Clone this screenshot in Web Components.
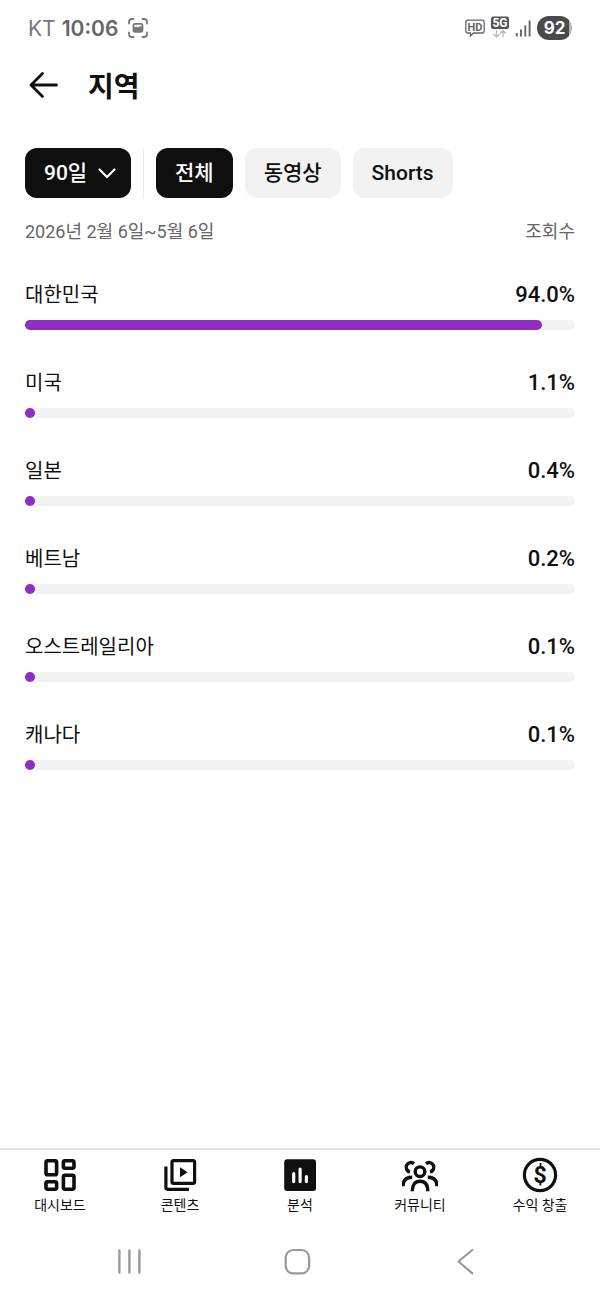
<!DOCTYPE html>
<html lang="ko">
<head>
<meta charset="utf-8">
<meta name="viewport" content="width=device-width, initial-scale=1">
<title>지역</title>
<style>
    body {
        margin: 0;
        background-color: #fff;
        color: #0f0f0f;
        font-family: Roboto, "Noto Sans CJK KR", sans-serif;
    }
</style>
</head>
<body>
<studio-app>
    <status-bar slot="top" carrier="KT" time="10:06" battery="92"></status-bar>
    <page-header slot="top">지역</page-header>

    <filter-bar>
        <period-select slot="period">90일</period-select>
        <filter-chip selected>전체</filter-chip>
        <filter-chip>동영상</filter-chip>
        <filter-chip>Shorts</filter-chip>
    </filter-bar>
    <range-caption>
        2026년 2월 6일~5월 6일
        <span slot="metric">조회수</span>
    </range-caption>
    <region-list>
        <region-row value="94.0">대한민국</region-row>
        <region-row value="1.1">미국</region-row>
        <region-row value="0.4">일본</region-row>
        <region-row value="0.2">베트남</region-row>
        <region-row value="0.1">오스트레일리아</region-row>
        <region-row value="0.1">캐나다</region-row>
    </region-list>

    <tab-bar slot="bottom">
        <tab-item icon="dashboard">대시보드</tab-item>
        <tab-item icon="content">콘텐츠</tab-item>
        <tab-item icon="analytics" current>분석</tab-item>
        <tab-item icon="community">커뮤니티</tab-item>
        <tab-item icon="earn">수익 창출</tab-item>
    </tab-bar>
    <system-nav slot="bottom"></system-nav>
</studio-app>

<script>
const ICONS = {
    dashboard: `
        <g fill="none" stroke="currentColor" stroke-width="3.6">
            <rect x="4" y="3.8" width="10.6" height="14" rx="1.6"/>
            <rect x="21.4" y="3.8" width="10.6" height="7.4" rx="1.6"/>
            <rect x="4" y="24.8" width="10.6" height="7.4" rx="1.6"/>
            <rect x="21.4" y="18.2" width="10.6" height="14" rx="1.6"/>
        </g>`,
    content: `
        <g fill="none" stroke="currentColor" stroke-width="3.2">
            <rect x="10" y="3.7" width="22.6" height="22.6" rx="1.6"/>
            <path d="M3.9 9.5V30.6q0 1.7 1.7 1.7H27"/>
        </g>
        <path d="M18 10.2V20.2L25.6 15.2Z" fill="currentColor"/>`,
    analytics: `
        <rect x="2.2" y="2.2" width="31.8" height="31.8" rx="3" fill="currentColor"/>
        <g fill="none" stroke="#fff" stroke-width="3.2" stroke-linecap="round">
            <path d="M11.7 16.5V24.6M18.1 12V24.6M24.4 19.7V24.6"/>
        </g>`,
    community: `
        <g fill="none" stroke="currentColor" stroke-width="3.4">
            <circle cx="18" cy="14.7" r="4.8"/>
            <path d="M10.2 34.3C10.2 27.600 13.2 24.3 18 24.3S25.8 27.600 25.8 34.3"/>
            <path d="M12 6.8A4.7 4.7 0 1 0 8 14.9"/>
            <path d="M24 6.8A4.7 4.7 0 1 1 28 14.9"/>
            <path d="M1 29.2C1 23.4 4.3 20.3 10.2 20.3"/>
            <path d="M35 29.2C35 23.4 31.7 20.3 25.8 20.3"/>
        </g>`,
    earn: `
        <circle cx="18" cy="18" r="15.6" fill="none" stroke="currentColor" stroke-width="3.2"/>
        <text x="18" y="26" text-anchor="middle" font-family="Roboto, sans-serif" font-size="23" font-weight="700" fill="currentColor">$</text>`
};

class StudioApp extends HTMLElement {
    constructor() {
        super();
        this.attachShadow({ mode: 'open' });
        this.shadowRoot.innerHTML = `
        <style>
        :host {
            display: flex;
            flex-direction: column;
            min-height: 100vh;
        }

        main {
            flex: 1;
            padding: 34px 25px 32px;
        }

        footer {
            position: sticky;
            bottom: 0;
            background-color: #fff;
        }
        </style>
        <slot name="top"></slot>
        <main><slot></slot></main>
        <footer><slot name="bottom"></slot></footer>
      `;
    }
}

class StatusBar extends HTMLElement {
    constructor() {
        super();
        this.attachShadow({ mode: 'open' });
        this.shadowRoot.innerHTML = `
        <style>
        :host {
            display: flex;
            align-items: center;
            justify-content: space-between;
            height: 56px;
            padding: 0 28px;
            color: #666;
            font-family: Inter, sans-serif;
            font-size: 21px;
        }

        .side {
            display: flex;
            align-items: center;
            gap: 6px;
        }

        .carrier {
            color: #777;
        }

        .time {
            font-weight: 600;
        }

        svg {
            display: block;
        }

        .capture {
            margin-left: 4px;
        }

        .battery {
            width: 35px;
            height: 24px;
            border-radius: 12px;
            background: linear-gradient(to right, #4a4a4a 92%, #b5b5b5 92%);
            color: #fff;
            font-size: 17px;
            font-weight: 700;
            line-height: 24px;
            text-align: center;
        }
        </style>
        <div class="side">
            <span class="carrier"></span>
            <span class="time"></span>
            <svg class="capture" width="20" height="20" viewBox="0 0 20 20" fill="none" stroke="#777" stroke-width="1.8" stroke-linecap="round">
                <path d="M1 5.5V4Q1 1 4 1H5.5M14.5 1H16Q19 1 19 4V5.5M19 14.5V16Q19 19 16 19H14.5M5.5 19H4Q1 19 1 16V14.5"/>
                <rect x="5.5" y="5.8" width="9" height="8" rx="1.5"/>
                <path d="M6 9.5L8.5 8.5 10 9.5 12 8 14 9V13.5H6Z" fill="#777" stroke="none"/>
            </svg>
        </div>
        <div class="side">
            <svg width="66" height="26" viewBox="0 0 66 26">
                <path d="M3 5.2H17Q19.2 5.2 19.2 7.500V15.8Q19.2 18 17 18H8.5L5.5 21V18H3Q.8 18 .8 15.8V7.500Q.8 5.2 3 5.2Z" fill="none" stroke="#666" stroke-width="1.3"/>
                <text x="10" y="15.8" text-anchor="middle" font-family="Roboto, sans-serif" font-size="11" font-weight="700" fill="#666">HD</text>
                <rect x="26" y="1.5" width="18" height="12.5" rx="2" fill="#555"/>
                <text x="35" y="12.2" text-anchor="middle" font-family="Roboto, sans-serif" font-size="12" font-weight="700" fill="#fff">5G</text>
                <path d="M31.5 15V22M28.5 19L31.5 22 34.5 19M38 22.5V15.500M35 18.500L38 15.500 41 18.500" fill="none" stroke="#bbb" stroke-width="1.3"/>
                <path d="M51.8 18V21.5M56 14.5V21.5M60.3 10.5V21.5M64.6 5.5V21.5" fill="none" stroke="#666" stroke-width="1.9"/>
            </svg>
            <span class="battery"></span>
        </div>
      `;
    }

    connectedCallback() {
        this.shadowRoot.querySelector('.carrier').textContent = this.getAttribute('carrier');
        this.shadowRoot.querySelector('.time').textContent = this.getAttribute('time');
        this.shadowRoot.querySelector('.battery').textContent = this.getAttribute('battery');
    }
}

class PageHeader extends HTMLElement {
    constructor() {
        super();
        this.attachShadow({ mode: 'open' });
        this.shadowRoot.innerHTML = `
        <style>
        :host {
            display: flex;
            align-items: center;
            gap: 28px;
            height: 58px;
            padding: 0 28px;
        }

        button {
            padding: 0;
            border: 0;
            background: none;
            color: inherit;
        }

        svg {
            display: block;
        }

        h1 {
            margin: 0;
            padding-top: 6px;
            font-size: 28px;
            line-height: 40px;
            font-weight: 700;
        }
        </style>
        <button type="button" aria-label="뒤로">
            <svg width="32" height="32" viewBox="0 0 32 32" fill="none" stroke="currentColor" stroke-width="2.8" stroke-linecap="round" stroke-linejoin="round">
                <path d="M28.5 16H3M14.5 4.5L3 16 14.5 27.5"/>
            </svg>
        </button>
        <h1><slot></slot></h1>
      `;
    }
}

class FilterBar extends HTMLElement {
    constructor() {
        super();
        this.attachShadow({ mode: 'open' });
        this.shadowRoot.innerHTML = `
        <style>
        :host {
            display: flex;
            gap: 12px;
        }

        .divider {
            width: 1px;
            background-color: #e9e9e9;
        }
        </style>
        <slot name="period"></slot>
        <div class="divider"></div>
        <slot></slot>
      `;
    }
}

class PeriodSelect extends HTMLElement {
    constructor() {
        super();
        this.attachShadow({ mode: 'open' });
        this.shadowRoot.innerHTML = `
        <style>
        :host {
            display: block;
            position: relative;
        }

        select {
            appearance: none;
            display: block;
            height: 50px;
            margin: 0;
            padding: 0 43px 0 19px;
            border: 0;
            border-radius: 12px;
            background-color: #0f0f0f;
            color: #fff;
            font: 500 21px/30px Roboto, "Noto Sans CJK KR", sans-serif;
        }

        svg {
            position: absolute;
            top: 16px;
            right: 14px;
            pointer-events: none;
        }
        </style>
        <select aria-label="기간"><option></option></select>
        <svg width="20" height="20" viewBox="0 0 20 20" fill="none" stroke="#fff" stroke-width="2.2" stroke-linecap="round" stroke-linejoin="round">
            <path d="M2.5 5.5L10 13 17.5 5.5"/>
        </svg>
      `;
    }

    connectedCallback() {
        this.shadowRoot.querySelector('option').textContent = this.textContent.trim();
    }
}

class FilterChip extends HTMLElement {
    constructor() {
        super();
        this.attachShadow({ mode: 'open' });
        this.shadowRoot.innerHTML = `
        <style>
        :host {
            display: block;
        }

        button {
            display: block;
            height: 50px;
            padding: 0 19px;
            border: 0;
            border-radius: 12px;
            background-color: #f2f2f2;
            color: #0f0f0f;
            font: 500 21px/30px Roboto, "Noto Sans CJK KR", sans-serif;
            white-space: nowrap;
        }

        :host([selected]) button {
            background-color: #0f0f0f;
            color: #fff;
        }
        </style>
        <button type="button"><slot></slot></button>
      `;
    }

    connectedCallback() {
        this.shadowRoot.querySelector('button').setAttribute('aria-pressed', this.hasAttribute('selected'));
    }
}

class RangeCaption extends HTMLElement {
    constructor() {
        super();
        this.attachShadow({ mode: 'open' });
        this.shadowRoot.innerHTML = `
        <style>
        :host {
            display: flex;
            justify-content: space-between;
            margin-top: 20px;
            color: #666;
            font-size: 18px;
            line-height: 28px;
        }
        </style>
        <div><slot></slot></div>
        <div><slot name="metric"></slot></div>
      `;
    }
}

class RegionList extends HTMLElement {
    constructor() {
        super();
        this.attachShadow({ mode: 'open' });
        this.shadowRoot.innerHTML = `
        <style>
        :host {
            display: flex;
            flex-direction: column;
            gap: 38px;
            margin-top: 34px;
        }
        </style>
        <slot></slot>
      `;
    }

    connectedCallback() {
        this.setAttribute('role', 'list');
    }
}

class RegionRow extends HTMLElement {
    constructor() {
        super();
        this.attachShadow({ mode: 'open' });
        this.shadowRoot.innerHTML = `
        <style>
        :host {
            display: block;
        }

        .text {
            display: flex;
            justify-content: space-between;
            font-size: 20px;
            line-height: 30px;
        }

        .value {
            font-size: 22px;
            font-weight: 500;
        }

        .track {
            height: 10px;
            margin-top: 10px;
            border-radius: 5px;
            background-color: #f2f2f2;
        }

        .fill {
            min-width: 10px;
            height: 100%;
            border-radius: 5px;
            background-color: #912dc1;
        }
        </style>
        <div class="text">
            <span><slot></slot></span>
            <span class="value"></span>
        </div>
        <div class="track"><div class="fill"></div></div>
      `;
    }

    connectedCallback() {
        const value = this.getAttribute('value');
        this.setAttribute('role', 'listitem');
        this.shadowRoot.querySelector('.value').textContent = `${value}%`;
        this.shadowRoot.querySelector('.fill').style.width = `${value}%`;
    }
}

class TabBar extends HTMLElement {
    constructor() {
        super();
        this.attachShadow({ mode: 'open' });
        this.shadowRoot.innerHTML = `
        <style>
        :host {
            display: block;
            border-top: 2px solid #e5e5e5;
        }

        nav {
            display: grid;
            grid-template-columns: repeat(5, 1fr);
        }
        </style>
        <nav><slot></slot></nav>
      `;
    }
}

class TabItem extends HTMLElement {
    constructor() {
        super();
        this.attachShadow({ mode: 'open' });
        this.shadowRoot.innerHTML = `
        <style>
        :host {
            display: block;
        }

        a {
            display: flex;
            flex-direction: column;
            align-items: center;
            gap: 2px;
            padding: 7px 0;
            color: #0f0f0f;
            font-size: 14px;
            line-height: 20px;
            text-decoration: none;
            white-space: nowrap;
        }
        </style>
        <a href="#">
            <svg width="36" height="36" viewBox="0 0 36 36" aria-hidden="true"></svg>
            <span><slot></slot></span>
        </a>
      `;
    }

    connectedCallback() {
        const link = this.shadowRoot.querySelector('a');
        link.href = `#${this.getAttribute('icon')}`;
        if (this.hasAttribute('current')) {
            link.setAttribute('aria-current', 'page');
        }
        this.shadowRoot.querySelector('svg').innerHTML = ICONS[this.getAttribute('icon')];
    }
}

class SystemNav extends HTMLElement {
    constructor() {
        super();
        this.attachShadow({ mode: 'open' });
        this.shadowRoot.innerHTML = `
        <style>
        :host {
            display: flex;
            justify-content: space-between;
            align-items: center;
            height: 78px;
            padding: 0 20% 0 19%;
        }

        button {
            padding: 0;
            border: 0;
            background: none;
            color: #999;
        }

        svg {
            display: block;
        }
        </style>
        <button type="button" aria-label="최근 앱">
            <svg width="30" height="30" viewBox="0 0 30 30" fill="none" stroke="currentColor" stroke-width="2.4" stroke-linecap="round">
                <path d="M5.4 4.5V26.5M15.4 4.5V26.5M25.4 4.5V26.5"/>
            </svg>
        </button>
        <button type="button" aria-label="홈">
            <svg width="30" height="30" viewBox="0 0 30 30" fill="none" stroke="currentColor" stroke-width="2.2">
                <rect x="3.7" y="4" width="23.4" height="23.4" rx="7.5"/>
            </svg>
        </button>
        <button type="button" aria-label="뒤로">
            <svg width="30" height="30" viewBox="0 0 30 30" fill="none" stroke="currentColor" stroke-width="2.2" stroke-linecap="round" stroke-linejoin="round">
                <path d="M22.3 4L8.5 15.5 22.3 27.3"/>
            </svg>
        </button>
      `;
    }
}

customElements.define('studio-app', StudioApp);
customElements.define('status-bar', StatusBar);
customElements.define('page-header', PageHeader);
customElements.define('filter-bar', FilterBar);
customElements.define('period-select', PeriodSelect);
customElements.define('filter-chip', FilterChip);
customElements.define('range-caption', RangeCaption);
customElements.define('region-list', RegionList);
customElements.define('region-row', RegionRow);
customElements.define('tab-bar', TabBar);
customElements.define('tab-item', TabItem);
customElements.define('system-nav', SystemNav);
</script>
</body>
</html>
